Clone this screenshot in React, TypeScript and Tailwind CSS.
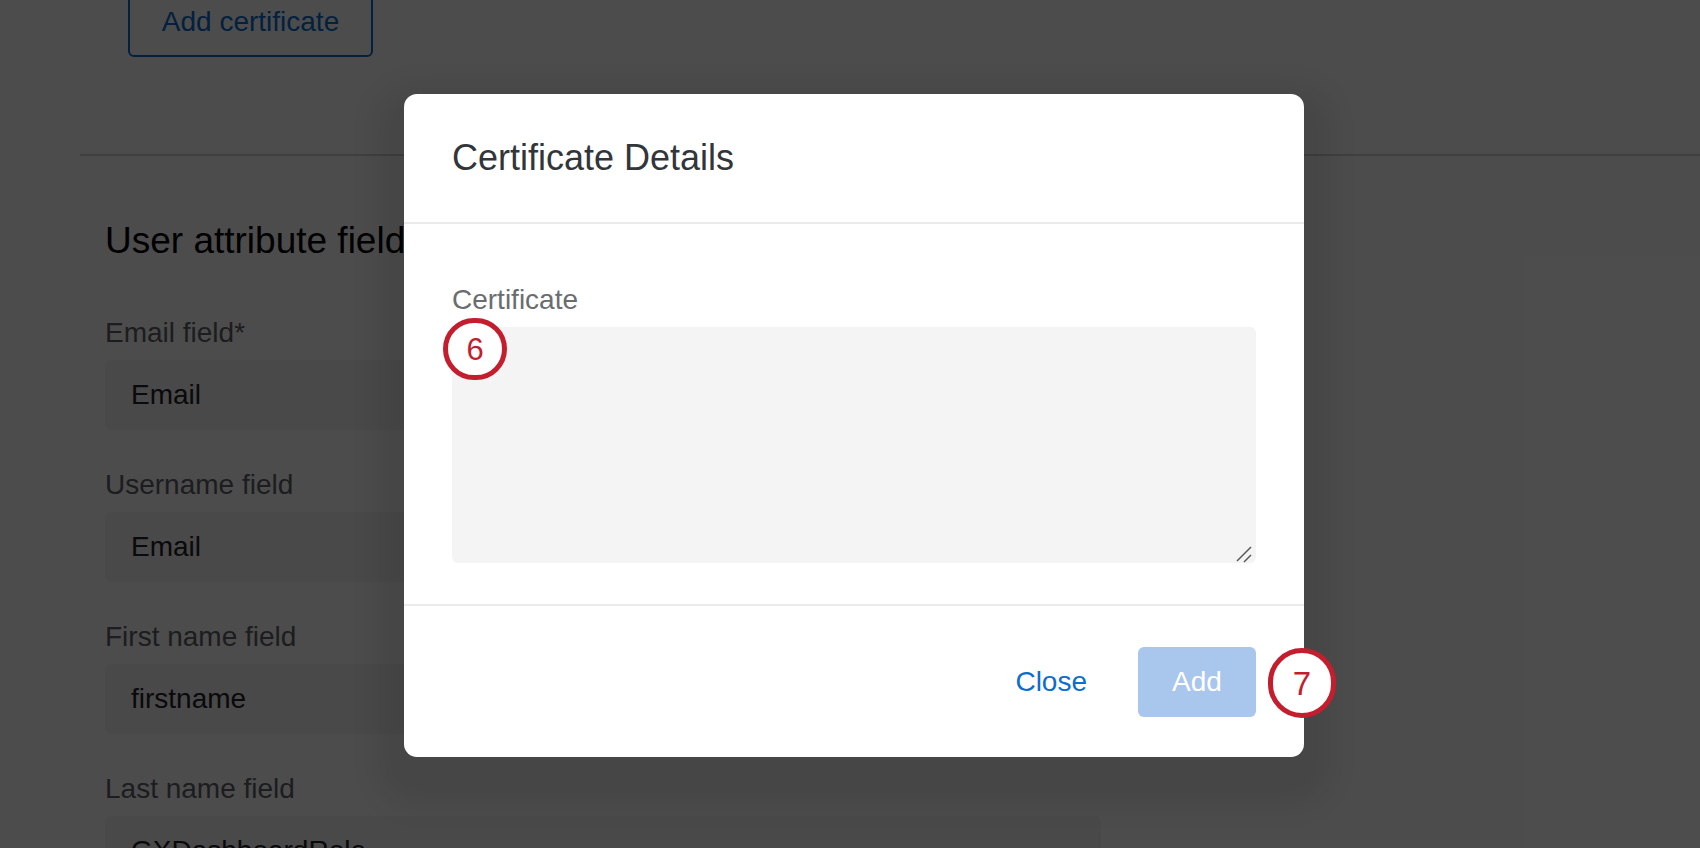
import React from "react";

const fields = [
  { label: "Email field*", value: "Email" },
  { label: "Username field", value: "Email" },
  { label: "First name field", value: "firstname" },
  { label: "Last name field", value: "GXDashboardRole" },
];

function Badge({ n, className }: { n: string; className: string }) {
  return (
    <div
      className={`absolute flex items-center justify-center rounded-full border-[5px] border-[#c41e2e] bg-white text-[#c41e2e] leading-none ${className}`}
    >
      {n}
    </div>
  );
}

export default function App() {
  return (
    <div className="relative h-[848px] w-full overflow-hidden bg-white font-['Liberation_Sans',Arial,sans-serif]">
      {/* Underlying page */}
      <div className="flex flex-col">
        <div className="-mt-[13px] pl-[128px]">
          <button className="h-[70px] w-[245px] rounded-[6px] border-2 border-[#0b6ed0] text-[28px] leading-[32px] text-[#0b6ed0]">
            Add certificate
          </button>
        </div>
        <div className="ml-[80px] mt-[97px] h-[2px] bg-[#d4d4d4]" />
        <section className="pl-[105px] pt-[65px]">
          <h2 className="text-[37px] leading-[40px] text-black">User attribute fields</h2>
          <div className="mt-[56px] flex w-[996px] flex-col gap-[39px]">
            {fields.map((f) => (
              <div key={f.label} className="flex flex-col">
                <label className="mb-[11px] text-[28px] leading-[32px] text-[#5f6265]">{f.label}</label>
                <div className="flex h-[70px] items-center rounded-[6px] bg-[#f4f4f4] pl-[26px] text-[28px] leading-[32px] text-[#1f2226]">
                  {f.value}
                </div>
              </div>
            ))}
          </div>
        </section>
      </div>

      {/* Backdrop */}
      <div className="absolute inset-0 bg-black/70" />

      {/* Modal */}
      <div className="absolute inset-0 flex items-start justify-center pl-[8px] pt-[94px]">
        <div className="relative flex w-[900px] flex-col rounded-[13px] bg-white shadow-[0_20px_28px_28px_rgba(0,0,0,0.08)]">
          <div className="flex h-[128px] items-center px-[48px]">
            <h1 className="text-[36px] leading-[40px] text-[#32363a]">Certificate Details</h1>
          </div>
          <div className="h-[2px] bg-[#ebebeb]" />
          <div className="flex flex-col px-[48px] pb-[41px] pt-[60px]">
            <label className="mb-[11px] text-[28px] leading-[32px] text-[#6a6d70]">Certificate</label>
            <div className="relative">
              <textarea className="block h-[236px] w-full resize-none rounded-[6px] bg-[#f4f4f4] outline-none" />
              <svg
                className="absolute bottom-[0px] right-[3px]"
                width="17"
                height="17"
                viewBox="0 0 17 17"
              >
                <line x1="1" y1="15" x2="15" y2="1" stroke="#555" strokeWidth="1.5" />
                <line x1="8" y1="16" x2="15" y2="9" stroke="#555" strokeWidth="1.5" />
              </svg>
            </div>
          </div>
          <div className="h-[2px] bg-[#ebebeb]" />
          <div className="flex h-[151px] items-center justify-end gap-[31px] pr-[48px]">
            <button className="px-[20px] text-[28px] leading-[32px] text-[#0b6ed0]">Close</button>
            <button className="h-[70px] w-[118px] rounded-[6px] bg-[#a9c6ed] text-[28px] leading-[32px] text-white">
              Add
            </button>
          </div>

          <Badge n="6" className="left-[39px] top-[224px] h-[62px] w-[64px] text-[31px]" />
          <Badge n="7" className="left-[864px] top-[554px] h-[70px] w-[68px] text-[33px]" />
        </div>
      </div>
    </div>
  );
}
